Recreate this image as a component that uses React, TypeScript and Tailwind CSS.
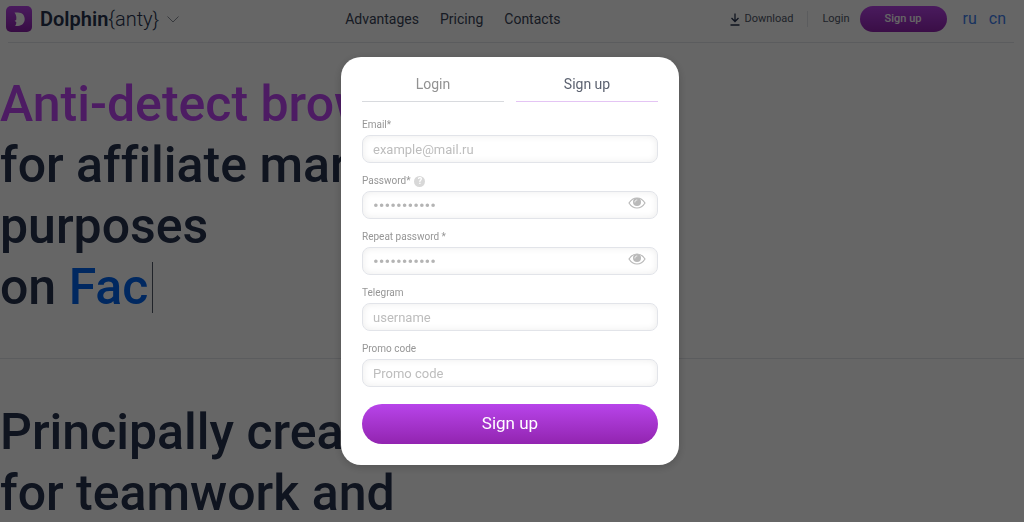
import { useState } from "react";
import type { FormEvent } from "react";

interface Field {
  id: string;
  label: string;
  placeholder: string;
  type: "email" | "password" | "text";
  help?: boolean;
}

const fields: Field[] = [
  { id: "email", label: "Email*", placeholder: "example@mail.ru", type: "email" },
  {
    id: "password",
    label: "Password*",
    placeholder: "•••••••••••",
    type: "password",
    help: true,
  },
  {
    id: "repeat-password",
    label: "Repeat password *",
    placeholder: "•••••••••••",
    type: "password",
  },
  { id: "telegram", label: "Telegram", placeholder: "username", type: "text" },
  { id: "promo", label: "Promo code", placeholder: "Promo code", type: "text" },
];

const navLinks = ["Advantages", "Pricing", "Contacts"];

const LogoIcon = () => (
  <svg width="26" height="26" viewBox="0 0 26 26" aria-hidden="true">
    <defs>
      <linearGradient id="logo-bg" x1="0" y1="0" x2="0" y2="1">
        <stop offset="0" stopColor="#b844ea" />
        <stop offset="1" stopColor="#8a1fa8" />
      </linearGradient>
    </defs>
    <rect width="26" height="26" rx="5" fill="url(#logo-bg)" />
    <path
      d="M8.500 6.500H12c4.200 0 6.700 2.800 6.700 6.600s-2.700 6.900-6.700 6.900H9c.9-1.100 1.400-2.300 1.300-3.800L8.600 14.800l1.600-.9c.5-2.600 0-5.200-1.700-7.400z"
      fill="#fff"
    />
  </svg>
);

const EyeIcon = () => (
  <svg width="18" height="12" viewBox="0 0 18 12" fill="none" aria-hidden="true">
    <path
      d="M1 6c2-3.200 4.800-5 8-5s6 1.800 8 5c-2 3.200-4.800 5-8 5S3 9.200 1 6z"
      stroke="currentColor"
      strokeWidth="1.200"
    />
    <circle cx="9" cy="5" r="4" fill="currentColor" />
    <path d="M6.900 5c0-1.200.8-2 2-2" stroke="#fff" strokeWidth=".8" strokeLinecap="round" />
  </svg>
);

const Header = () => (
  <header className="ml-2 mr-2.5 flex h-[43px] items-center border-b border-[#e3e5ea] pb-1">
    <a href="#home" className="-ml-0.5 flex items-center gap-2 text-xl text-[#26324e]">
      <LogoIcon />
      <span>
        <span className="font-semibold">Dolphin</span>
        <span className="font-light">{"{anty}"}</span>
      </span>
      <svg width="12" height="7" viewBox="0 0 12 7" fill="none" aria-hidden="true">
        <path d="M.5.5 6 6 11.500.5" stroke="#8a8f99" />
      </svg>
    </a>

    <nav className="flex flex-1 justify-center gap-[21px] pr-1 text-sm text-[#3a4458]">
      {navLinks.map((link) => (
        <a key={link} href={`#${link.toLowerCase()}`}>
          {link}
        </a>
      ))}
    </nav>

    <div className="flex items-center text-[11px] text-[#505868]">
      <a href="#download" className="flex items-center gap-1">
        <svg width="10" height="13" viewBox="0 0 10 13" fill="none" aria-hidden="true">
          <path d="M5 .5v8M1.500 5 5 8.500 8.500 5M.5 12h9" stroke="#26324e" strokeWidth="1.300" />
        </svg>
        Download
      </a>
      <span className="mx-3.5 h-4 w-px bg-[#e3e5ea]" />
      <a href="#login">Login</a>
      <button
        type="button"
        className="ml-2.5 h-[26px] w-[87px] rounded-full bg-linear-to-b from-[#b844ea] to-[#9224b0] text-[11px] font-medium text-white">
        Sign up
      </button>
      <div className="ml-4 mr-2 flex gap-3 text-base text-[#3f7fee]">
        <a href="#ru">ru</a>
        <a href="#cn">cn</a>
      </div>
    </div>
  </header>
);

const Landing = () => (
  <main className="text-[50px] font-medium leading-[61px] text-[#26324e] [font-variant-ligatures:none]">
    <section className="border-b border-[#e3e5ea] pb-10 pt-[31px]">
      <h1>
        <span className="text-[#c048f8]">Anti-detect browser</span>
        <br />
        for affiliate marketing
        <br />
        purposes
        <br />
        <span className="flex items-center gap-1">
          <span>
            on <span className="text-[#0064f0]">Fac</span>
          </span>
          <span className="h-[51px] w-px bg-[#505868]" />
        </span>
      </h1>
    </section>
    <section className="pt-[43px]">
      <h2>
        Principally created
        <br />
        for teamwork and
      </h2>
    </section>
  </main>
);

const FormField = ({ field }: { field: Field }) => {
  const [visible, setVisible] = useState(false);
  const isPassword = field.type === "password";

  return (
    <div>
      <div className="mb-1 flex h-3 items-center gap-1 text-[10px] leading-3 text-[#969696]">
        <label htmlFor={field.id}>{field.label}</label>
        {field.help && (
          <button
            type="button"
            aria-label="Password requirements"
            className="size-[11px] rounded-full bg-[#d8d8d8] text-[9px] font-bold leading-[11px] text-white">
            ?
          </button>
        )}
      </div>
      <div className="relative">
        <input
          id={field.id}
          type={isPassword && visible ? "text" : field.type}
          placeholder={field.placeholder}
          className={`block h-7 w-full rounded-lg border border-[#e2e4e9] bg-white px-2.5 text-gray-700 shadow-[inset_0_0_7px_rgba(0,0,0,0.08)] outline-none focus:border-[#b844ea] ${
            isPassword
              ? "text-[17px] placeholder:text-[#b4b4b4]"
              : "text-[13px] placeholder:text-[#bdbdbd]"
          }`}
        />
        {isPassword && (
          <button
            type="button"
            aria-label="Show password"
            onClick={() => setVisible(!visible)}
            className="absolute right-3 top-1.5 text-[#b9b9b9]">
            <EyeIcon />
          </button>
        )}
      </div>
    </div>
  );
};

const SignUpModal = () => {
  const [tab, setTab] = useState("Sign up");

  const submit = (e: FormEvent) => e.preventDefault();

  return (
    <div
      role="dialog"
      aria-label="Sign up"
      className="w-full max-w-[338px] rounded-[20px] bg-white px-[21px] pb-[21px] pt-2.5 shadow-[0_2px_10px_rgba(0,0,0,0.2)]">
      {/* Tabs */}
      <div className="grid grid-cols-2 gap-3 text-sm">
        {["Login", "Sign up"].map((name) => (
          <button
            key={name}
            type="button"
            onClick={() => setTab(name)}
            className={`h-[35px] border-b ${
              tab === name
                ? "border-[#e4c4f4] text-[#5c6270]"
                : "border-[#d8dade] text-[#929292]"
            }`}>
            {name}
          </button>
        ))}
      </div>

      {/* Form */}
      <form onSubmit={submit} className="mt-[17px]">
        <div className="flex flex-col gap-3">
          {fields.map((field) => (
            <FormField key={field.id} field={field} />
          ))}
        </div>
        <button
          type="submit"
          className="mt-[17px] h-10 w-full rounded-full bg-linear-to-b from-[#b844ea] to-[#9224b0] text-[17px] text-white">
          Sign up
        </button>
      </form>
    </div>
  );
};

const App = () => {
  return (
    <div className="h-screen overflow-hidden bg-white font-[Roboto,sans-serif]">
      <Header />
      <Landing />
      <div className="fixed inset-0 flex items-center justify-center bg-black/60 pr-1">
        <SignUpModal />
      </div>
    </div>
  );
};

export default App;
